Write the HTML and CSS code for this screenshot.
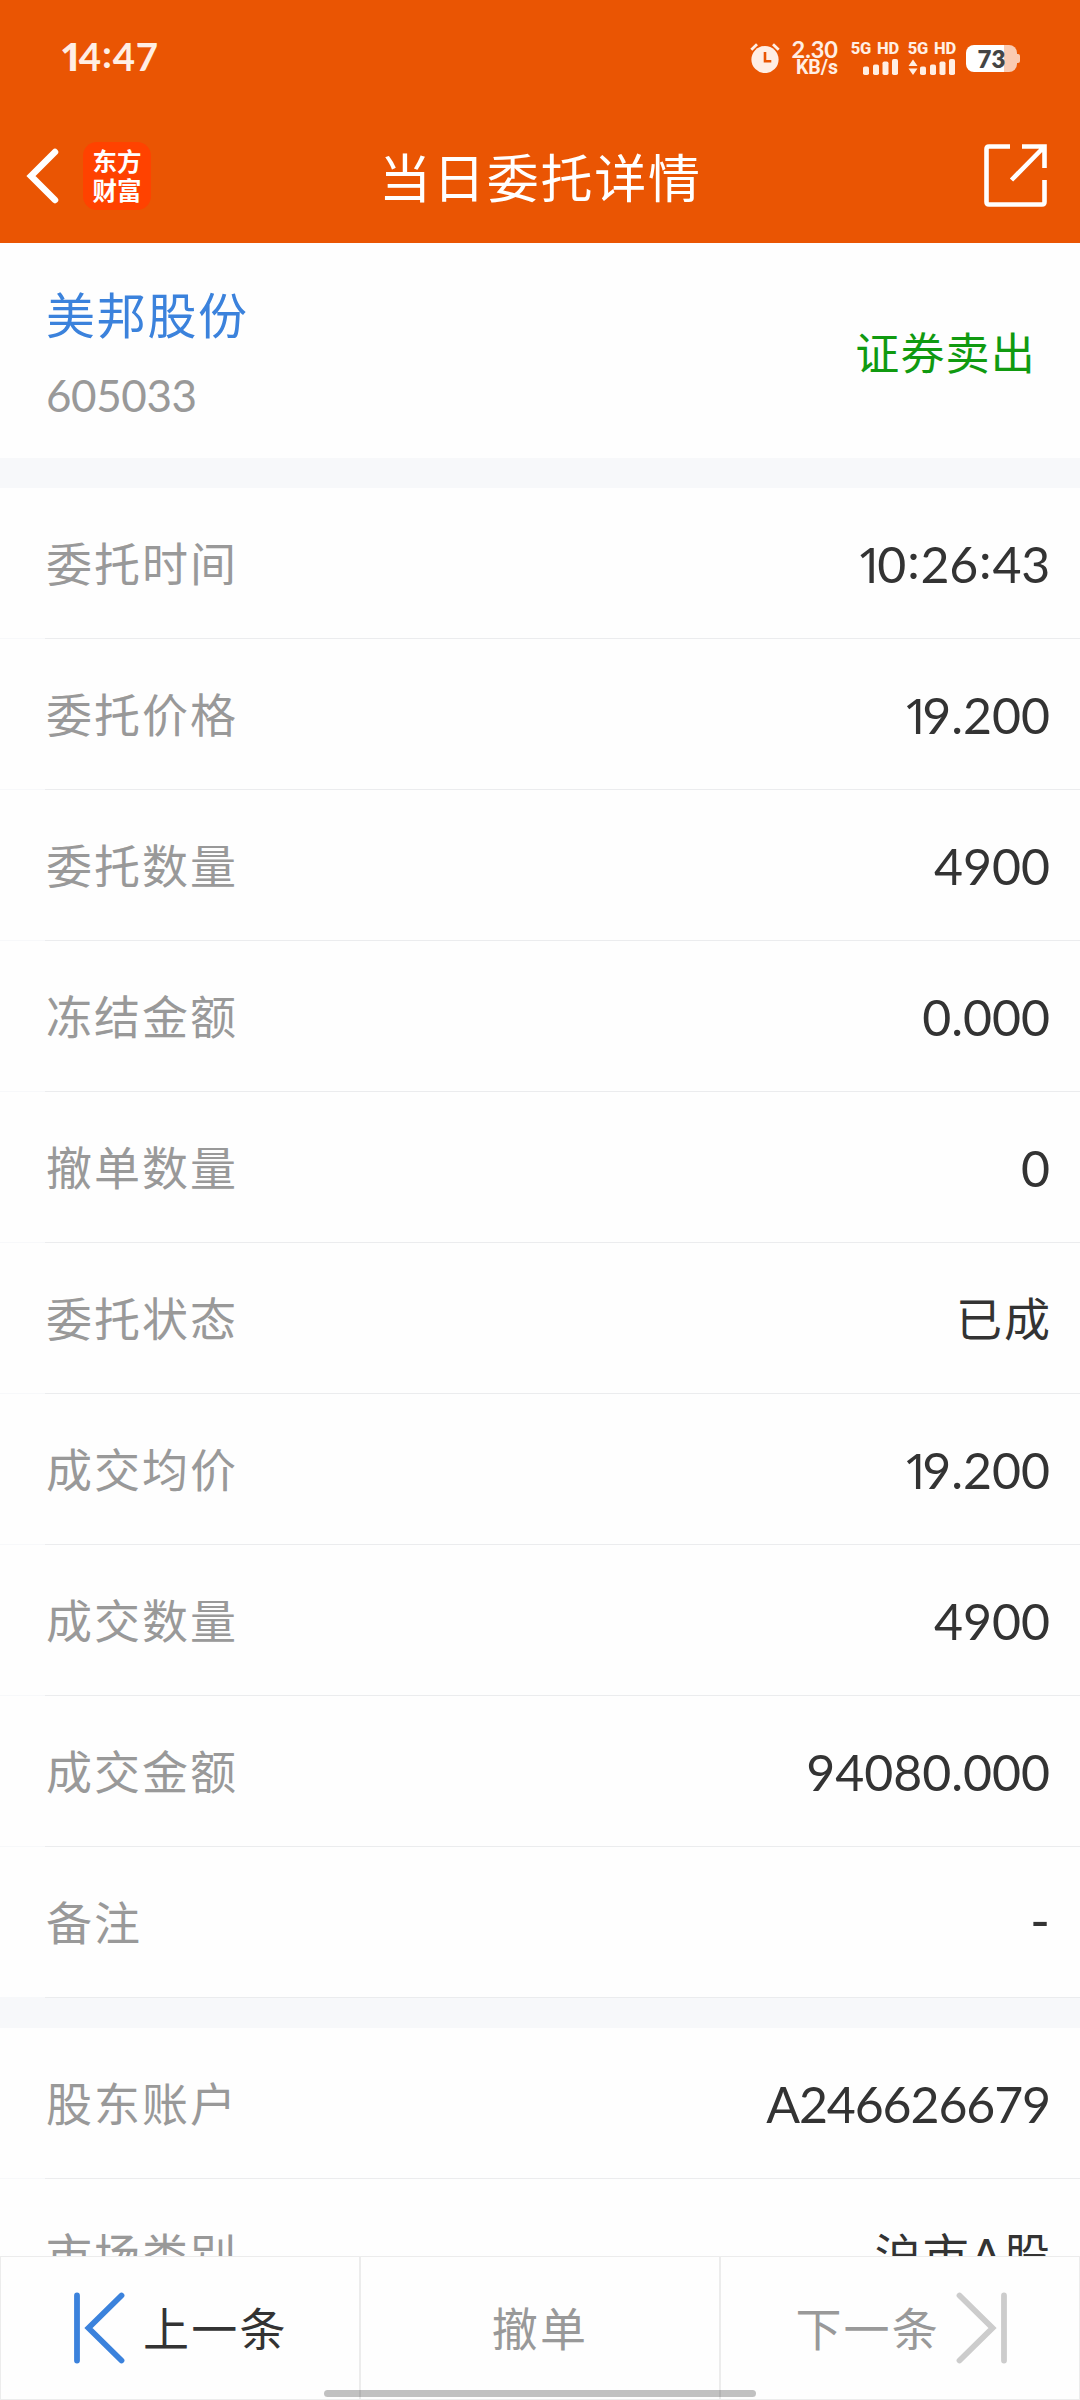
FILE: index.html
```html
<!DOCTYPE html>
<html lang="zh-CN">
<head>
<meta charset="utf-8">
<title>当日委托详情</title>
<link rel="stylesheet" href="styles.css">
</head>
<body>
<div class="screen">
  <header class="header">
    <div class="status">
      <span class="clock"><i>1</i>4<span class="clock-colon">:</span>47</span>
      <div class="status-icons">
        <svg class="alarm" width="30" height="30" viewBox="0 0 30 30">
          <circle cx="15" cy="16.5" r="13.6" fill="#ffeee4"/>
          <path d="M1.300 6.800 7 1.300M23 1.300l5.700 5.500" stroke="#ffeee4" stroke-width="2.800" fill="none"/>
          <path d="M15 9v9.300h6.300" stroke="#ea5503" stroke-width="2.600" fill="none"/>
        </svg>
        <div class="speed"><span class="speed-num">2.30</span><span class="speed-unit">KB/s</span></div>
        <div class="signal">
          <span>5G HD</span>
          <svg width="48" height="18" viewBox="0 0 48 18" fill="#ffeee4">
            <rect x="12" y="8.5" width="6" height="8.5" rx="1.8"/><rect x="22" y="6.5" width="6" height="10.5" rx="1.8"/><rect x="31.500" y="3.500" width="6" height="13.500" rx="1.8"/><rect x="41" y="1" width="6" height="16" rx="1.8"/>
          </svg>
        </div>
        <div class="signal">
          <span>5G HD</span>
          <svg width="48" height="18" viewBox="0 0 48 18" fill="#ffeee4">
            <path d="M5 1.500 9.500 8h-9zM5 17 .5 10.500h9z"/>
            <rect x="12" y="8.5" width="6" height="8.5" rx="1.8"/><rect x="22" y="6.5" width="6" height="10.5" rx="1.8"/><rect x="31.500" y="3.500" width="6" height="13.500" rx="1.8"/><rect x="41" y="1" width="6" height="16" rx="1.8"/>
          </svg>
        </div>
        <div class="battery"><span>73</span></div>
      </div>
    </div>
    <div class="nav">
      <div class="nav-left">
        <svg width="34" height="56" viewBox="0 0 34 56"><path d="M29 4 5 28l24 24" fill="none" stroke="#fff" stroke-width="6.500" stroke-linecap="round"/></svg>
        <div class="logo"><span>东方</span><span>财富</span></div>
      </div>
      <h1 class="title">当日委托详情</h1>
      <svg class="share" width="64" height="64" viewBox="0 0 64 64" fill="none" stroke="#fff" stroke-width="4.600">
        <path d="M26 2.500H5Q2.500 2.500 2.500 5v53q0 2.500 2.500 2.500h53q2.500 0 2.500-2.500V36"/>
        <path d="M38 2.500h22.500V24M60 3 27.500 36"/>
      </svg>
    </div>
  </header>

  <section class="stock">
    <div class="stock-id">
      <div class="name">美邦股份</div>
      <div class="code">605033</div>
    </div>
    <div class="side">证券卖出</div>
  </section>

  <main class="list">
    <section class="group">
      <div class="row"><span class="label">委托时间</span><span class="value time"><i>1</i>0<b>:</b>26<b>:</b>43</span></div>
      <div class="row"><span class="label">委托价格</span><span class="value"><i>1</i>9.200</span></div>
      <div class="row"><span class="label">委托数量</span><span class="value">4900</span></div>
      <div class="row"><span class="label">冻结金额</span><span class="value">0.000</span></div>
      <div class="row"><span class="label">撤单数量</span><span class="value">0</span></div>
      <div class="row"><span class="label">委托状态</span><span class="value han">已成</span></div>
      <div class="row"><span class="label">成交均价</span><span class="value"><i>1</i>9.200</span></div>
      <div class="row"><span class="label">成交数量</span><span class="value">4900</span></div>
      <div class="row"><span class="label">成交金额</span><span class="value">94080.000</span></div>
      <div class="row"><span class="label">备注</span><span class="value dash">-</span></div>
    </section>
    <section class="group">
      <div class="row"><span class="label">股东账户</span><span class="value account">A246626679</span></div>
      <div class="row"><span class="label">市场类别</span><span class="value han">沪市A股</span></div>
    </section>
  </main>

  <footer class="actions">
    <button class="action prev">
      <svg width="52" height="72" viewBox="0 0 52 72" fill="none" stroke="#3b82dc" stroke-width="5.800" stroke-linecap="round"><path d="M4 3.500v65M48.500 3.500 15.500 36l33 32.500"/></svg>
      <span>上一条</span>
    </button>
    <button class="action cancel"><span>撤单</span></button>
    <button class="action next">
      <span>下一条</span>
      <svg width="52" height="72" viewBox="0 0 52 72" fill="none" stroke="#ccc" stroke-width="5.800" stroke-linecap="round"><path d="M48 3.500v65M3.500 3.500 36.500 36l-33 32.500"/></svg>
    </button>
    <div class="home-bar"></div>
  </footer>
</div>
</body>
</html>
```
FILE: styles.css
```css
* { box-sizing: border-box; }
body {
  margin: 0;
  background: #fff;
  font-family: Lato, "Noto Sans CJK SC", sans-serif;
}
.screen {
  width: 1080px;
  height: 2400px;
  display: flex;
  flex-direction: column;
  overflow: hidden;
  background: #fefefe;
}
svg { display: block; flex: none; }

.header { flex: none; height: 243px; background: #ea5503; color: #fff; }
.status {
  height: 108px;
  padding: 8px 60px 0 60px;
  display: flex;
  align-items: center;
  justify-content: space-between;
  color: #ffeee4;
}
.clock { padding-bottom: 7px; font: 700 38.500px/50px Lato, sans-serif; letter-spacing: 0.8px; }
.clock i { margin-right: -4px; font-family: "Noto Sans", sans-serif; font-style: normal; line-height: 1; }
.clock-colon { vertical-align: 3px; }
.status-icons { display: flex; align-items: center; }
.alarm { margin-right: 1px; }
.speed {
  width: 46px;
  margin-left: 11px;
  display: flex;
  flex-direction: column;
  align-items: flex-end;
  font-weight: 700;
}
.speed-num { font-size: 23.500px; line-height: 20px; }
.speed-unit { font: 700 19.500px/18px Roboto, sans-serif; }
.signal {
  width: 48px;
  margin-left: 13px;
  display: flex;
  flex-direction: column;
  align-items: flex-end;
  font: 800 16.500px/17px Roboto, sans-serif;
  word-spacing: 2px;
  letter-spacing: -0.2px;
  white-space: nowrap;
}
.signal span { padding-bottom: 1px; margin-top: -1px; }
.signal + .signal { margin-left: 9px; }
.battery {
  position: relative;
  width: 51px;
  height: 27px;
  margin: 0 3px 0 10px;
  border-radius: 8px;
  background: linear-gradient(90deg, #fff 38px, #facbb2 38px);
  color: #444;
  font: 800 24px/27px Lato, sans-serif;
  text-align: center;
}
.battery::after {
  content: "";
  position: absolute;
  left: 51px;
  top: 9px;
  width: 3px;
  height: 9px;
  border-radius: 0 2px 2px 0;
  background: #facbb2;
}

.nav {
  height: 135px;
  padding: 0 32px 0 26px;
  display: grid;
  grid-template-columns: 1fr auto 1fr;
  align-items: center;
}
.nav-left { display: flex; align-items: center; gap: 23px; }
.logo {
  width: 68px;
  height: 68px;
  border-radius: 14px;
  background: #ff4200;
  display: flex;
  flex-direction: column;
  align-items: center;
  justify-content: center;
  padding-bottom: 2px;
  font: 700 24.500px/29px "Noto Sans CJK SC", sans-serif;
}
.title {
  margin: 0;
  padding-left: 7px;
  font: 400 52px/70px "Noto Sans CJK SC", sans-serif;
  letter-spacing: 1.8px;
}
.share { justify-self: end; }

.stock {
  flex: none;
  height: 215px;
  padding: 0 44px 0 46px;
  display: flex;
  align-items: center;
  justify-content: space-between;
}
.name { font-size: 49px; line-height: 70px; letter-spacing: 1.7px; color: #3b82dc; }
.code { margin: 15px 0 -3px; font-size: 44px; line-height: 60px; letter-spacing: -0.4px; color: #999; }
.side { font-size: 44px; letter-spacing: 1.2px; color: #109a10; }

.list { flex: 1; min-height: 0; overflow: hidden; }
.group { border-top: 30px solid #f7f8fa; }
.row {
  height: 151px;
  padding: 0 30px 0 46px;
  display: flex;
  align-items: center;
  justify-content: space-between;
  background:
    linear-gradient(#ebecee, #ebecee) 45px 100% / 100% 1px no-repeat,
    linear-gradient(#f7f8fa, #f7f8fa) 0 100% / 45px 1px no-repeat;
}
.label { font-size: 46px; line-height: 60px; letter-spacing: 2px; color: #999; }
.value { font-size: 50px; line-height: 60px; color: #333; }
.value i {
  margin-right: -9px;
  font-family: "Noto Sans", sans-serif;
  font-style: normal;
  line-height: 1;
}
.value b { margin: 0 1px; font-weight: 400; line-height: 1; vertical-align: 4px; }
.time { letter-spacing: -0.2px; }
.time i { margin-right: -7px; }
.account { letter-spacing: -1.1px; }
.han { margin-right: -2px; font-size: 46px; letter-spacing: 2px; }
.dash { padding-bottom: 5px; font-size: 54px; }

.actions {
  position: relative;
  flex: none;
  height: 144px;
  display: grid;
  grid-template-columns: 358px 360px 1fr;
  border: 1px solid #ececec;
}
.action {
  padding: 0;
  border: 0;
  background: #fefefe;
  display: flex;
  align-items: center;
  color: #999;
  font: 400 46px/60px "Noto Sans CJK SC", sans-serif;
  letter-spacing: 2.2px;
}
.action span { margin-top: -5px; }
.action + .action { border-left: 2px solid #ececec; }
.prev { padding-left: 72px; gap: 18px; color: #333; }
.cancel { justify-content: center; }
.next { padding-right: 71px; gap: 16px; justify-content: flex-end; }
.home-bar {
  position: absolute;
  left: 323px;
  bottom: 2px;
  width: 432px;
  height: 7px;
  border-radius: 4px;
  background: rgba(0, 0, 0, 0.24);
}
```
